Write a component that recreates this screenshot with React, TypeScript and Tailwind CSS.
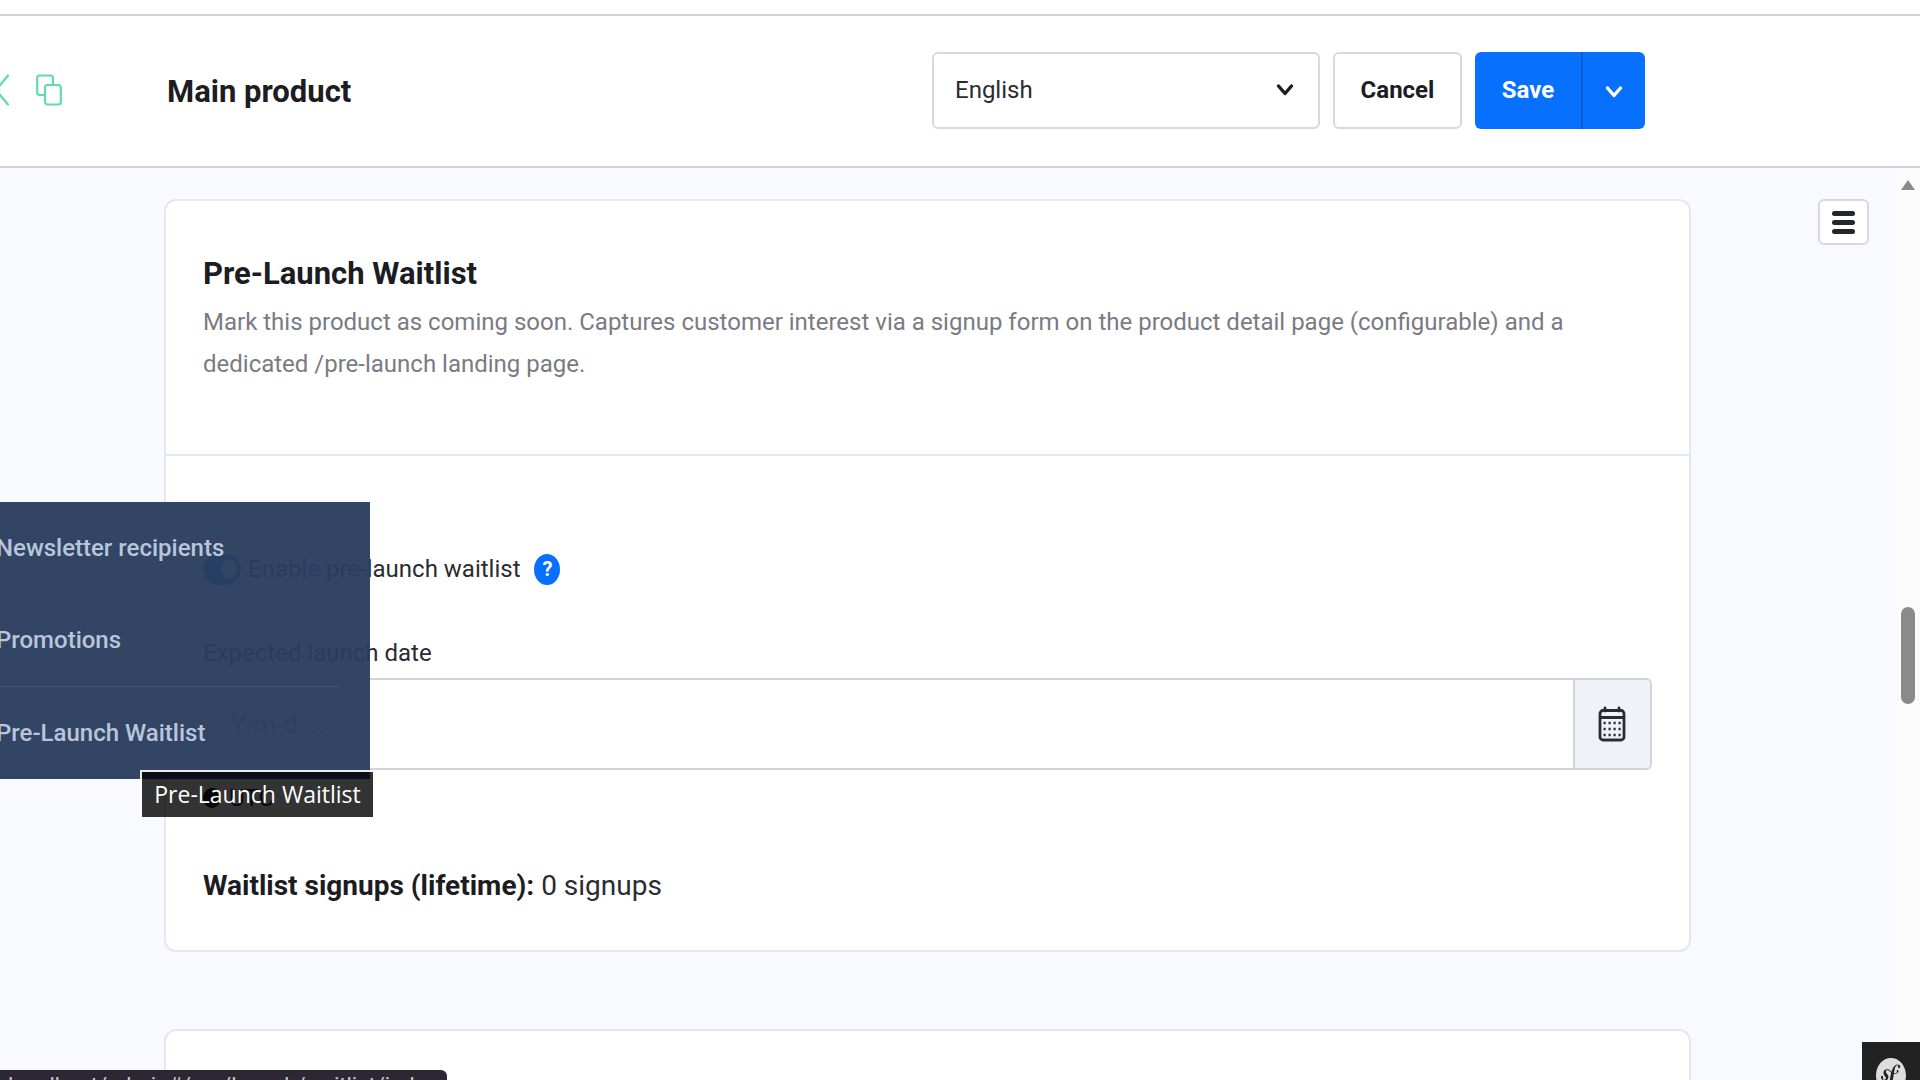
import React, { useState } from "react";
import { SiSymfony } from "react-icons/si";

function Chevron({ className }: { className: string }) {
  return (
    <svg viewBox="0 0 18 14" className={className} fill="none" stroke="currentColor" strokeWidth="3.4" strokeLinecap="round" strokeLinejoin="round" aria-hidden="true">
      <path d="M2.5 3 9 10.5 15.5 3" />
    </svg>
  );
}

function CloseIcon() {
  return (
    <svg viewBox="0 0 26 32" className="h-8 w-[26px]" fill="none" stroke="#5fdcaa" strokeWidth="2.2" strokeLinecap="round" aria-hidden="true">
      <path d="M1 1.500 25 30.500M25 1.500 1 30.500" />
    </svg>
  );
}

function CopyIcon() {
  return (
    <svg viewBox="0 0 26 32" className="h-8 w-[26px]" fill="none" stroke="#5fdcaa" strokeWidth="2.2" strokeLinejoin="round" aria-hidden="true">
      <path d="M9 21H3.500A2.500 2.500 0 0 1 1.200 18.500V4A2.500 2.500 0 0 1 3.500 1.500h11A2.500 2.500 0 0 1 17 4v7" />
      <rect x="9" y="11" width="15.800" height="19.500" rx="2.500" />
    </svg>
  );
}

function CalendarIcon() {
  return (
    <svg viewBox="0 0 28 36" className="h-9 w-7" fill="none" stroke="#2b2c33" strokeWidth="2.800" aria-hidden="true">
      <rect x="2" y="4.500" width="24" height="29.500" rx="3" />
      <path d="M2 11.500h24" />
      <path d="M7 2v3M21 2v3" strokeLinecap="round" />
      <g strokeWidth="2.600" strokeDasharray="2.200 2.800">
        <path d="M5.500 17h17.500M5.500 23h17.500M5.500 29h17.500" />
      </g>
    </svg>
  );
}

function FlyoutLink({ children }: { children: React.ReactNode }) {
  return (
    <a href="#" className="-ml-1 flex h-[92px] items-center text-[24px] font-medium whitespace-nowrap text-[#b9c5dc]">
      {children}
    </a>
  );
}

export default function App() {
  const [enabled, setEnabled] = useState(true);
  return (
    <div className="relative flex h-screen flex-col overflow-hidden bg-[#f9faff] font-[Roboto,sans-serif] text-[24px] text-[#2b2c33]">
      <div className="h-[14px] shrink-0 bg-white" />
      <header className="flex h-[154px] shrink-0 items-center border-y-2 border-[#d1d4db] bg-white pr-[275px] pb-[2px]">
        <div className="flex w-[167px] shrink-0 items-center gap-[27px] overflow-hidden">
          <button aria-label="Close" className="-ml-[17px]"><CloseIcon /></button>
          <button aria-label="Duplicate"><CopyIcon /></button>
        </div>
        <h1 className="flex-1 pt-1 text-[31px] font-bold text-[#1c1d22]">Main product</h1>
        <div className="relative mr-[13px] w-[388px]">
          <select aria-label="Language" className="block h-[77px] w-full appearance-none rounded-md border-2 border-[#d8d8df] bg-white px-[21px]">
            <option>English</option>
          </select>
          <Chevron className="pointer-events-none absolute top-[31px] right-[26px] h-[14px] w-[18px] text-[#1c1d22]" />
        </div>
        <button className="mr-[13px] h-[77px] w-[129px] rounded-md border-2 border-[#d8d8df] bg-white font-bold text-[#1c1d22]">Cancel</button>
        <div className="flex h-[77px] overflow-hidden rounded-md bg-[#0870ff] text-white">
          <button className="w-[108px] border-r-2 border-[#075dd5] font-bold">Save</button>
          <button aria-label="More save options" className="flex w-[62px] items-center justify-center pt-1"><Chevron className="h-[14px] w-[18px]" /></button>
        </div>
      </header>

      <div className="flex min-h-0 flex-1">
        <main className="min-w-0 flex-1 overflow-hidden pt-[31px] pl-[164px]">
          <section className="rounded-xl border-2 border-[#e6e7ee] bg-white">
            <div className="h-[255px] border-b-2 border-[#e6e7ee] px-[37px] pt-[51px]">
              <h2 className="text-[31px] leading-[44px] font-bold text-[#1c1d22]">Pre-Launch Waitlist</h2>
              <p className="mt-[5px] leading-[42px] text-[#7a7b82]">
                Mark this product as coming soon. Captures customer interest via a signup form on the product detail page (configurable) and a dedicated /pre-launch landing page.
              </p>
            </div>
            <div className="px-[37px] pt-[92px] pb-[43px]">
              <div className="flex h-[42px] items-center">
                <label className="flex items-center gap-[7px]">
                  <span className="relative flex h-[31px] w-[38px] items-center justify-end rounded-full bg-[#0870ff] pr-1">
                    <input type="checkbox" checked={enabled} onChange={() => setEnabled(!enabled)} className="absolute inset-0 opacity-0" />
                    <span className="h-5 w-4 rounded-[50%] bg-white" />
                  </span>
                  Enable pre-launch waitlist
                </label>
                <button aria-label="Help" className="ml-[14px] flex h-[31px] w-[26px] items-center justify-center rounded-[50%] bg-[#0870ff] text-[20px] font-bold text-white">?</button>
              </div>
              <label htmlFor="launch-date" className="mt-[42px] block leading-[42px]">Expected launch date</label>
              <div className="mt-1 flex h-[92px] overflow-hidden rounded-md border-2 border-[#d1d4db]">
                <input id="launch-date" placeholder="Y-m-d ..." className="min-w-0 flex-1 px-[26px] text-[26px] placeholder:text-[#8a8d98]" />
                <button aria-label="Open calendar" className="flex w-[77px] items-center justify-center border-l-2 border-[#d1d4db] bg-[#f0f2f8] pr-[2px]"><CalendarIcon /></button>
              </div>
              <div className="mt-3 flex h-8 items-center gap-2 text-[24px]">
                <span className="h-5 w-[18px] rounded-[50%] bg-[#1c1d22]" />UTC
              </div>
              <p className="mt-[51px] text-[28px] leading-[42px]"><strong className="text-[#1c1d22]">Waitlist signups (lifetime):</strong> 0 signups</p>
            </div>
          </section>
          <section className="mt-[77px] h-40 rounded-xl border-2 border-[#e6e7ee] bg-white" />
        </main>
        <aside className="w-[205px] shrink-0 pt-[31px] pl-[127px]">
          <button aria-label="Open menu" className="flex h-[46px] w-[51px] flex-col items-center justify-center gap-1 rounded-md border-2 border-[#d8d8df] bg-white">
            <span className="h-[5px] w-[23px] rounded-sm bg-[#25262c]" />
            <span className="h-[5px] w-[23px] rounded-sm bg-[#25262c]" />
            <span className="h-[5px] w-[23px] rounded-sm bg-[#25262c]" />
          </button>
        </aside>
        <div className="flex w-6 shrink-0 flex-col items-center bg-[#fcfcfd] pt-3">
          <svg viewBox="0 0 14 10" className="h-[10px] w-[14px]" aria-hidden="true"><path d="M7 0 14 10H0z" fill="#8a8a8a" /></svg>
          <div className="mt-[417px] h-[97px] w-[14px] rounded-full bg-[#8a8a8a]" />
        </div>
      </div>

      <nav aria-label="Marketing" className="absolute top-[502px] left-0 w-[370px] bg-[#2a3d5e]/96">
        <FlyoutLink>Newsletter recipients</FlyoutLink>
        <FlyoutLink>Promotions</FlyoutLink>
        <div className="mr-8 h-px bg-[#465673]" />
        <FlyoutLink>Pre-Launch Waitlist</FlyoutLink>
      </nav>
      <div role="tooltip" className="absolute top-[770px] left-[140px] flex h-[49px] w-[235px] items-center justify-center border-2 border-white/90 border-r-transparent border-b-transparent bg-black/80 bg-clip-padding font-['Open_Sans',sans-serif] text-[23px] whitespace-nowrap text-white">
        Pre-Launch Waitlist
      </div>
      <div className="absolute bottom-0 left-0 h-[10px] w-[447px] overflow-hidden rounded-tr-md bg-[#2d2733] pl-2 text-[22px] leading-[32px] whitespace-nowrap text-[#c9c6cf]">
        localhost/admin#/pre/launch/waitlist/index
      </div>
      <button aria-label="Symfony toolbar" className="absolute right-0 bottom-0 flex h-[38px] w-[58px] justify-center overflow-hidden bg-[#222222] pt-4">
        <SiSymfony preserveAspectRatio="none" className="h-[35px] w-[30px] shrink-0 text-[#dddddd]" />
      </button>
    </div>
  );
}
